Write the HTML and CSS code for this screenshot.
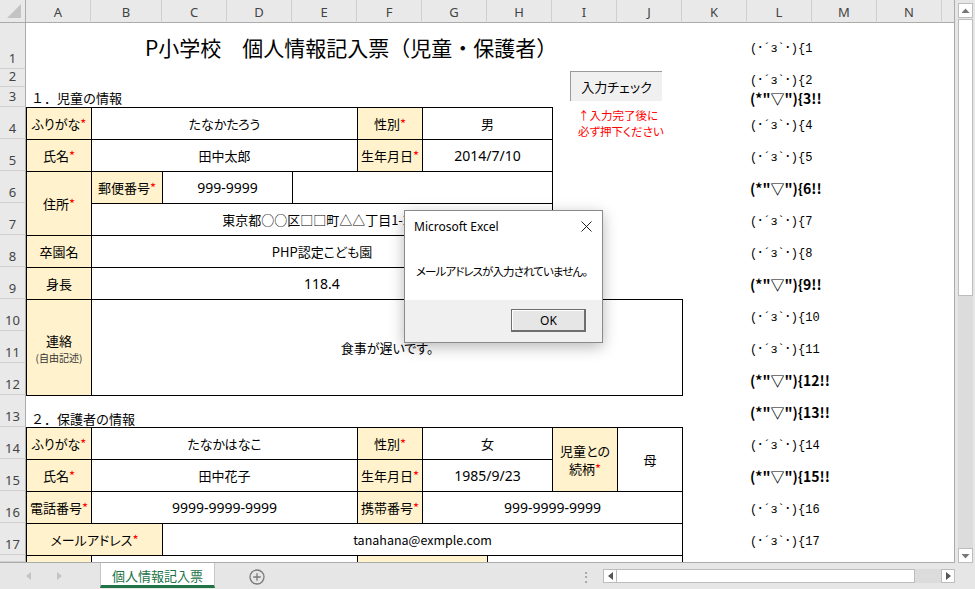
FILE: index.html
```html
<!DOCTYPE html>
<html lang="ja">
<head>
<meta charset="utf-8">
<title>個人情報記入票</title>
<link rel="stylesheet" href="styles.css">
</head>
<body>
<div class="app">
  <div class="main">
    <div class="sheet">
      <div class="corner"><svg width="16" height="17" viewBox="0 0 16 17"><polygon points="15,2 15,16 1,16" fill="#c3c3c3"/></svg></div>
      <div class="ch">A</div><div class="ch">B</div><div class="ch">C</div><div class="ch">D</div><div class="ch">E</div><div class="ch">F</div><div class="ch">G</div><div class="ch">H</div><div class="ch">I</div><div class="ch">J</div><div class="ch">K</div><div class="ch">L</div><div class="ch">M</div><div class="ch">N</div><div class="ch last"></div>

      <div class="rh y1">1</div><div class="rh y2">2</div><div class="rh y3">3</div><div class="rh y4">4</div><div class="rh y5">5</div><div class="rh y6">6</div><div class="rh y7">7</div><div class="rh y8">8</div><div class="rh y9">9</div><div class="rh y10">10</div><div class="rh y11">11</div><div class="rh y12">12</div><div class="rh y13">13</div><div class="rh y14">14</div><div class="rh y15">15</div><div class="rh y16">16</div><div class="rh y17">17</div><div class="rh y18"></div>

      <div class="title y1 xA w9">P小学校　個人情報記入票（児童・保護者）</div>
      <div class="head y3 xA w4">１．児童の情報</div>

      <div class="bx lab y4 xA">ふりがな<span class="req">*</span></div>
      <div class="bx val y4 xB w4">たなかたろう</div>
      <div class="bx lab y4 xF">性別<span class="req">*</span></div>
      <div class="bx val y4 xG w2">男</div>

      <div class="bx lab y5 xA">氏名<span class="req">*</span></div>
      <div class="bx val y5 xB w4">田中太郎</div>
      <div class="bx lab y5 xF">生年月日<span class="req">*</span></div>
      <div class="bx val num y5 xG w2">2014/7/10</div>

      <div class="bx lab y6 s2 xA">住所<span class="req">*</span></div>
      <div class="bx lab y6 xB">郵便番号<span class="req">*</span></div>
      <div class="bx val num y6 xC w2">999-9999</div>
      <div class="bx val y6 xE w4"></div>
      <div class="bx val y7 xB w7">東京都○○区□□町△△丁目1-2-3</div>

      <div class="bx lab y8 xA">卒園名</div>
      <div class="bx val y8 xB w7">PHP認定こども園</div>

      <div class="bx lab y9 xA">身長</div>
      <div class="bx val num y9 xB w7">118.4</div>

      <div class="bx lab col y10 s3 xA"><span class="big">連絡</span><span class="small">(自由記述)</span></div>
      <div class="bx val y10 s3 xB w9">食事が遅いです。</div>

      <div class="head low y13 xA w4">２．保護者の情報</div>

      <div class="bx lab y14 xA">ふりがな<span class="req">*</span></div>
      <div class="bx val y14 xB w4">たなかはなこ</div>
      <div class="bx lab y14 xF">性別<span class="req">*</span></div>
      <div class="bx val y14 xG w2">女</div>
      <div class="bx lab col y14 s2 xI"><span>児童との</span><span>続柄<span class="req">*</span></span></div>
      <div class="bx val y14 s2 xJ">母</div>

      <div class="bx lab y15 xA">氏名<span class="req">*</span></div>
      <div class="bx val y15 xB w4">田中花子</div>
      <div class="bx lab y15 xF">生年月日<span class="req">*</span></div>
      <div class="bx val num y15 xG w2">1985/9/23</div>

      <div class="bx lab y16 xA">電話番号<span class="req">*</span></div>
      <div class="bx val num y16 xB w4">9999-9999-9999</div>
      <div class="bx lab y16 xF">携帯番号<span class="req">*</span></div>
      <div class="bx val num y16 xG w4">999-9999-9999</div>

      <div class="bx lab y17 xA w2">メールアドレス<span class="req">*</span></div>
      <div class="bx val mail y17 xC w8">tanahana@exmple.com</div>

      <div class="bx lab y18 xA"></div>
      <div class="bx val y18 xB w4"></div>
      <div class="bx lab y18 xF w2"></div>
      <div class="bx val y18 xH w3"></div>

      <div class="kao y1 xL">(･´з`･){1</div>
      <div class="kao y2 xL">(･´з`･){2</div>
      <div class="kao b y3 xL">(*"▽"){3!!</div>
      <div class="kao y4 xL">(･´з`･){4</div>
      <div class="kao y5 xL">(･´з`･){5</div>
      <div class="kao b y6 xL">(*"▽"){6!!</div>
      <div class="kao y7 xL">(･´з`･){7</div>
      <div class="kao y8 xL">(･´з`･){8</div>
      <div class="kao b y9 xL">(*"▽"){9!!</div>
      <div class="kao y10 xL">(･´з`･){10</div>
      <div class="kao y11 xL">(･´з`･){11</div>
      <div class="kao b y12 xL">(*"▽"){12!!</div>
      <div class="kao b y13 xL">(*"▽"){13!!</div>
      <div class="kao y14 xL">(･´з`･){14</div>
      <div class="kao b y15 xL">(*"▽"){15!!</div>
      <div class="kao y16 xL">(･´з`･){16</div>
      <div class="kao y17 xL">(･´з`･){17</div>

      <div class="check-btn">入力チェック</div>
      <div class="note">↑入力完了後に<br>必ず押下ください</div>
    </div>
    <div class="vscroll">
      <div class="sbtn"><svg width="9" height="6" viewBox="0 0 9 6"><polygon points="4.5,0.5 8.5,5 0.5,5" fill="#777"/></svg></div>
      <div class="vthumb"></div>
      <div class="vtrack"></div>
      <div class="sbtn"><svg width="9" height="6" viewBox="0 0 9 6"><polygon points="0.5,1 8.5,1 4.5,5.5" fill="#777"/></svg></div>
    </div>
  </div>
  <div class="tabbar">
    <div class="navs">
      <svg width="6" height="8" viewBox="0 0 6 8"><polygon points="5,0 5,8 0,4" fill="#c4c4c4"/></svg>
      <svg width="6" height="8" viewBox="0 0 6 8"><polygon points="1,0 1,8 6,4" fill="#c4c4c4"/></svg>
    </div>
    <div class="tab">個人情報記入票</div>
    <div class="plus"><svg width="16" height="16" viewBox="0 0 16 16"><circle cx="8" cy="8" r="7" fill="none" stroke="#7a7a7a" stroke-width="1.3"/><path d="M8 4.2v7.6M4.2 8h7.6" stroke="#7a7a7a" stroke-width="1.3"/></svg></div>
    <div class="dots">⋮</div>
    <div class="hscroll">
      <div class="hbtn"><svg width="5" height="8" viewBox="0 0 5 8"><polygon points="5,0 5,8 0,4" fill="#555"/></svg></div>
      <div class="hthumb"></div>
      <div class="htrack"></div>
      <div class="hbtn"><svg width="5" height="8" viewBox="0 0 5 8"><polygon points="0,0 0,8 5,4" fill="#555"/></svg></div>
    </div>
  </div>
</div>

<div class="dialog">
  <div class="dlg-body">
    <div class="dlg-title">
      <span>Microsoft Excel</span>
      <svg width="11" height="11" viewBox="0 0 11 11"><path d="M0.5 0.5L10.5 10.5M10.5 0.5L0.5 10.5" stroke="#222" stroke-width="1"/></svg>
    </div>
    <div class="dlg-msg">メールアドレスが入力されていません。</div>
  </div>
  <div class="dlg-foot">
    <div class="ok">OK</div>
  </div>
</div>
</body>
</html>
```

FILE: styles.css
```css
* { box-sizing: border-box; }
html, body { margin: 0; padding: 0; }
body {
  width: 975px;
  height: 589px;
  overflow: hidden;
  background: #e6e6e6;
  font-family: "Noto Sans CJK JP", sans-serif;
  color: #000;
  position: relative;
}
.app { display: flex; flex-direction: column; height: 589px; }
.main { display: flex; height: 563px; }

.sheet {
  position: relative;
  width: 955px;
  height: 563px;
  overflow: hidden;
  background: #fff;
  border-right: 1px solid #ababab;
  border-bottom: 1px solid #ababab;
  display: grid;
  grid-template-columns: 26px 65px 71px repeat(12, 65px) 12px;
  grid-template-rows: 23px 46px 18px 20px repeat(14, 32px) 7px;
}

.corner {
  grid-row: 1; grid-column: 1;
  background: #e9e9e9;
  border-right: 1px solid #ababab;
  border-bottom: 1px solid #ababab;
  display: flex; align-items: flex-start; justify-content: flex-end;
  padding: 2px 3px 0 0;
}
.ch {
  grid-row: 1;
  background: #e9e9e9;
  border-right: 1px solid #cfcfcf;
  border-bottom: 1px solid #ababab;
  font-family: "Noto Sans", sans-serif;
  font-size: 13px;
  color: #444;
  display: flex; align-items: center; justify-content: center;
  padding-top: 1px;
}
.ch.last { border-right: none; }
.rh {
  grid-column: 1;
  background: #e9e9e9;
  border-right: 1px solid #ababab;
  border-bottom: 1px solid #cfcfcf;
  font-family: "Noto Sans", sans-serif;
  font-size: 13px;
  color: #444;
  display: flex; align-items: flex-end; justify-content: center;
  padding-bottom: 3px;
  line-height: 14px;
}

/* row placement */
.y1 { grid-row: 2; } .y2 { grid-row: 3; } .y3 { grid-row: 4; } .y4 { grid-row: 5; }
.y5 { grid-row: 6; } .y6 { grid-row: 7; } .y7 { grid-row: 8; } .y8 { grid-row: 9; }
.y9 { grid-row: 10; } .y10 { grid-row: 11; } .y11 { grid-row: 12; } .y12 { grid-row: 13; }
.y13 { grid-row: 14; } .y14 { grid-row: 15; } .y15 { grid-row: 16; } .y16 { grid-row: 17; }
.y17 { grid-row: 18; } .y18 { grid-row: 19; }
.s2 { grid-row-end: span 2; } .s3 { grid-row-end: span 3; }

/* column placement */
.xA { grid-column: 2; } .xB { grid-column: 3; } .xC { grid-column: 4; } .xE { grid-column: 6; }
.xF { grid-column: 7; } .xG { grid-column: 8; } .xH { grid-column: 9; } .xI { grid-column: 10; }
.xJ { grid-column: 11; } .xL { grid-column: 13; }
.w2 { grid-column-end: span 2; } .w3 { grid-column-end: span 3; } .w4 { grid-column-end: span 4; }
.w7 { grid-column-end: span 7; } .w8 { grid-column-end: span 8; } .w9 { grid-column-end: span 9; }

.title {
  font-size: 21px;
  white-space: nowrap;
  display: flex; align-items: center;
  padding-left: 119px;
  padding-top: 1px;
}
.head {
  font-size: 13px;
  white-space: nowrap;
  display: flex; align-items: flex-end;
  padding-left: 5px;
  padding-bottom: 1px;
  line-height: 16px;
}
.head.low { padding-bottom: 0; }

.bx {
  border: 1px solid #000;
  margin: 0 -1px -1px 0;
  font-size: 13px;
  font-feature-settings: "palt";
  display: flex; align-items: center; justify-content: center;
  white-space: nowrap;
  line-height: 18px;
}
.bx.num {
  font-family: "Noto Sans", "Noto Sans CJK JP", sans-serif;
  font-size: 14px;
}
.bx.mail { font-size: 12.5px; }
.lab { background: #fff2cc; }
.val { background: #fff; }
.col { flex-direction: column; }
.big { line-height: 19px; }
.small { font-size: 10px; line-height: 15px; color: #333; }
.req { color: #ff0000; }

.kao {
  font-family: "Liberation Mono", "Noto Sans CJK JP", monospace;
  font-size: 12px;
  white-space: nowrap;
  display: flex; align-items: center;
  padding-left: 3px;
  padding-top: 1px;
}
.kao.b {
  font-family: "Noto Sans CJK JP", sans-serif;
  font-weight: 700;
  font-size: 14px;
  padding-top: 2px;
}

.check-btn {
  position: absolute;
  left: 570px; top: 71px;
  width: 92px; height: 30px;
  background: #f0f0f0;
  border-top: 1px solid #9a9a9a;
  border-left: 1px solid #9a9a9a;
  font-size: 13px;
  display: flex; align-items: center; justify-content: center;
  font-feature-settings: "palt";
}
.note {
  position: absolute;
  left: 578px; top: 107px;
  color: #ff0000;
  font-size: 11.5px;
  line-height: 16px;
  font-feature-settings: "palt";
  white-space: nowrap;
}

/* vertical scrollbar */
.vscroll {
  width: 20px;
  height: 563px;
  display: flex; flex-direction: column;
  padding: 3px 2px 0 3px;
  background: #e6e6e6;
}
.sbtn {
  height: 15px;
  background: #fff;
  border: 1px solid #bdbdbd;
  display: flex; align-items: center; justify-content: center;
  flex: none;
}
.vthumb {
  height: 277px;
  flex: none;
  background: #fff;
  border: 1px solid #bdbdbd;
  margin-top: 1px;
}
.vtrack { flex: 1; background: #dcdcdc; }

/* bottom tab bar */
.tabbar {
  height: 26px;
  display: flex;
  align-items: stretch;
  background: #e6e6e6;
  font-size: 13px;
}
.navs {
  width: 100px;
  display: flex; align-items: center;
  gap: 24px;
  padding-left: 26px;
}
.tab {
  width: 115px;
  background: #fff;
  border-left: 1px solid #c6c6c6;
  border-right: 1px solid #c6c6c6;
  border-bottom: 3px solid #217346;
  color: #217346;
  display: flex; align-items: center; justify-content: center;
  padding-top: 2px;
  margin-bottom: 1px;
}
.plus {
  width: 50px;
  display: flex; align-items: center; justify-content: center;
  padding-left: 33px;
  padding-top: 1px;
}
.dots {
  width: 330px;
  display: flex; align-items: center; justify-content: center;
  color: #999;
  font-size: 14px;
  padding-left: 312px;
}
.hscroll {
  display: flex;
  align-items: center;
  width: 352px;
  height: 14px;
  margin-top: 6px;
  margin-left: 8px;
}
.hbtn {
  width: 14px; height: 14px;
  background: #fff;
  border: 1px solid #bdbdbd;
  display: flex; align-items: center; justify-content: center;
  flex: none;
}
.hthumb {
  width: 298px; height: 14px;
  background: #fff;
  border: 1px solid #bdbdbd;
  border-left: none;
  flex: none;
}
.htrack { flex: 1; height: 14px; background: #dcdcdc; }

/* dialog */
.dialog {
  position: absolute;
  left: 404px; top: 210px;
  width: 199px; height: 133px;
  border: 1px solid #8a8a8a;
  background: #fff;
  box-shadow: 0 4px 14px rgba(0, 0, 0, 0.28);
  display: flex; flex-direction: column;
}
.dlg-body { flex: 1; }
.dlg-title {
  display: flex; align-items: center; justify-content: space-between;
  padding: 7px 10px 0 9px;
  font-family: "Noto Sans", sans-serif;
  font-size: 12px;
  color: #000;
  height: 24px;
}
.dlg-msg {
  font-size: 11.5px;
  letter-spacing: -0.9px;
  font-feature-settings: "palt";
  padding: 28px 0 0 11px;
  line-height: 16px;
  white-space: nowrap;
}
.dlg-foot {
  height: 42px;
  background: #f0f0f0;
  display: flex; justify-content: flex-end; align-items: flex-start;
  padding: 9px 16px 0 0;
}
.ok {
  width: 75px; height: 23px;
  background: #e6e6e6;
  border: 1px solid #6e6e6e;
  box-shadow: inset -1px -1px 0 #6e6e6e, inset 1px 1px 0 #fff;
  font-family: "Noto Sans", sans-serif;
  font-size: 12px;
  display: flex; align-items: center; justify-content: center;
}
```
